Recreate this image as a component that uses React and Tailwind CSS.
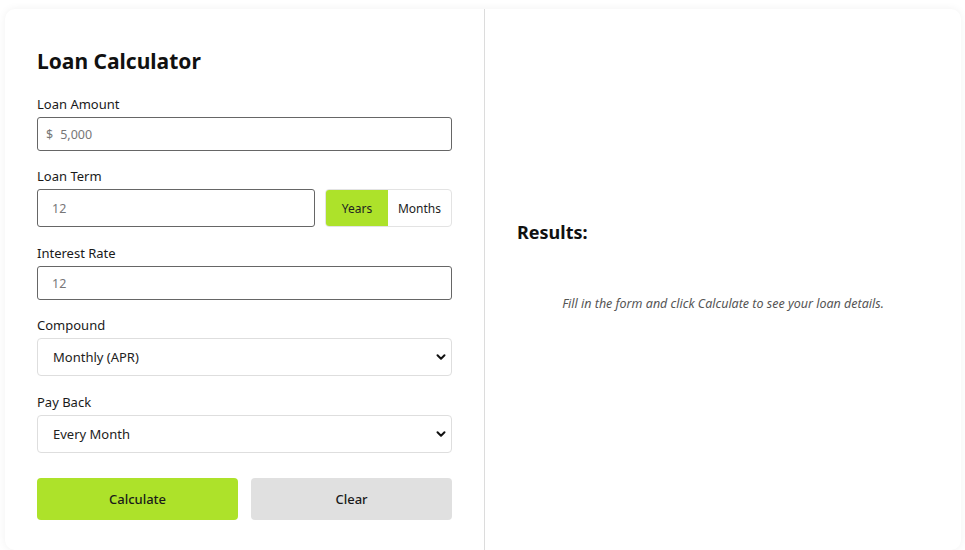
import React from "react";

function Chevron() {
  return (
    <svg width="12" height="12" viewBox="0 0 12 12" className="pointer-events-none absolute right-[4px] top-1/2 -translate-y-1/2">
      <path d="M2.5 4.2 L6 7.7 L9.5 4.2" fill="none" stroke="#111" strokeWidth="2" strokeLinecap="round" strokeLinejoin="round" />
    </svg>
  );
}

function Label({ children }) {
  return <div className="text-[13px] leading-[21px] text-[#1a1a1a] pt-[1px] mb-[2px]">{children}</div>;
}

export default function App() {
  return (
    <div className="bg-white min-h-[550px] pt-[9px] pl-[5px] pr-[4px]" style={{ fontFamily: '"Noto Sans", "Open Sans", sans-serif' }}>
      <div className="flex rounded-[10px] bg-white shadow-[0_0_8px_rgba(0,0,0,0.06)]">
        <div className="w-[480px] border-r border-[#dcdcdc] px-8 pt-[36px] pb-[30px]">
          <h2 className="text-[21px] leading-[33px] font-bold text-[#111] mb-[15px]">Loan Calculator</h2>

          <div className="mb-[14px]">
            <Label>Loan Amount</Label>
            <div className="flex items-center h-[34px] border border-[#666] rounded-[3px] px-[8px] pt-[2px] text-[12.5px] text-[#777]">
              <span className="mr-[7px]">$</span>
              <span>5,000</span>
            </div>
          </div>

          <div className="mb-[15px]">
            <Label>Loan Term</Label>
            <div className="flex gap-[10px]">
              <div className="flex-1 flex items-center h-[38px] border border-[#666] rounded-[3px] px-[14px] pt-[2px] text-[12.5px] text-[#777]">12</div>
              <div className="flex w-[127px] h-[38px] border border-[#e3e3e3] rounded-[4px] text-[12px] text-[#222]">
                <div className="w-[62px] flex items-center justify-center bg-[#ade22a] rounded-l-[3px] pt-[1px]">Years</div>
                <div className="flex-1 flex items-center justify-center pt-[1px]">Months</div>
              </div>
            </div>
          </div>

          <div className="mb-[14px]">
            <Label>Interest Rate</Label>
            <div className="flex items-center h-[34px] border border-[#666] rounded-[3px] px-[14px] pt-[2px] text-[12.5px] text-[#777]">12</div>
          </div>

          <div className="mb-[15px]">
            <Label>Compound</Label>
            <div className="relative flex items-center h-[38px] border border-[#dedede] rounded-[4px] px-[15px] pt-[2px] text-[13px] text-[#222]">
              Monthly (APR)
              <Chevron />
            </div>
          </div>

          <div>
            <Label>Pay Back</Label>
            <div className="relative flex items-center h-[38px] border border-[#dedede] rounded-[4px] px-[15px] pt-[2px] text-[13px] text-[#222]">
              Every Month
              <Chevron />
            </div>
          </div>

          <div className="flex gap-[13px] mt-[25px]">
            <button className="flex-1 h-[42px] rounded-[4px] bg-[#ade22a] pt-[2px] text-[13px] font-medium text-[#1a1a1a]">Calculate</button>
            <button className="flex-1 h-[42px] rounded-[4px] bg-[#e0e0e0] pt-[2px] text-[13px] font-medium text-[#1a1a1a]">Clear</button>
          </div>
        </div>

        <div className="flex-1 flex flex-col justify-center px-8">
          <div className="pb-[26px]">
            <h3 className="text-[18px] leading-[27px] font-bold text-[#111]">Results:</h3>
            <p className="mt-[48px] text-center italic text-[12.5px] leading-[20px] text-[#555]">
              Fill in the form and click Calculate to see your loan details.
            </p>
          </div>
        </div>
      </div>
    </div>
  );
}
